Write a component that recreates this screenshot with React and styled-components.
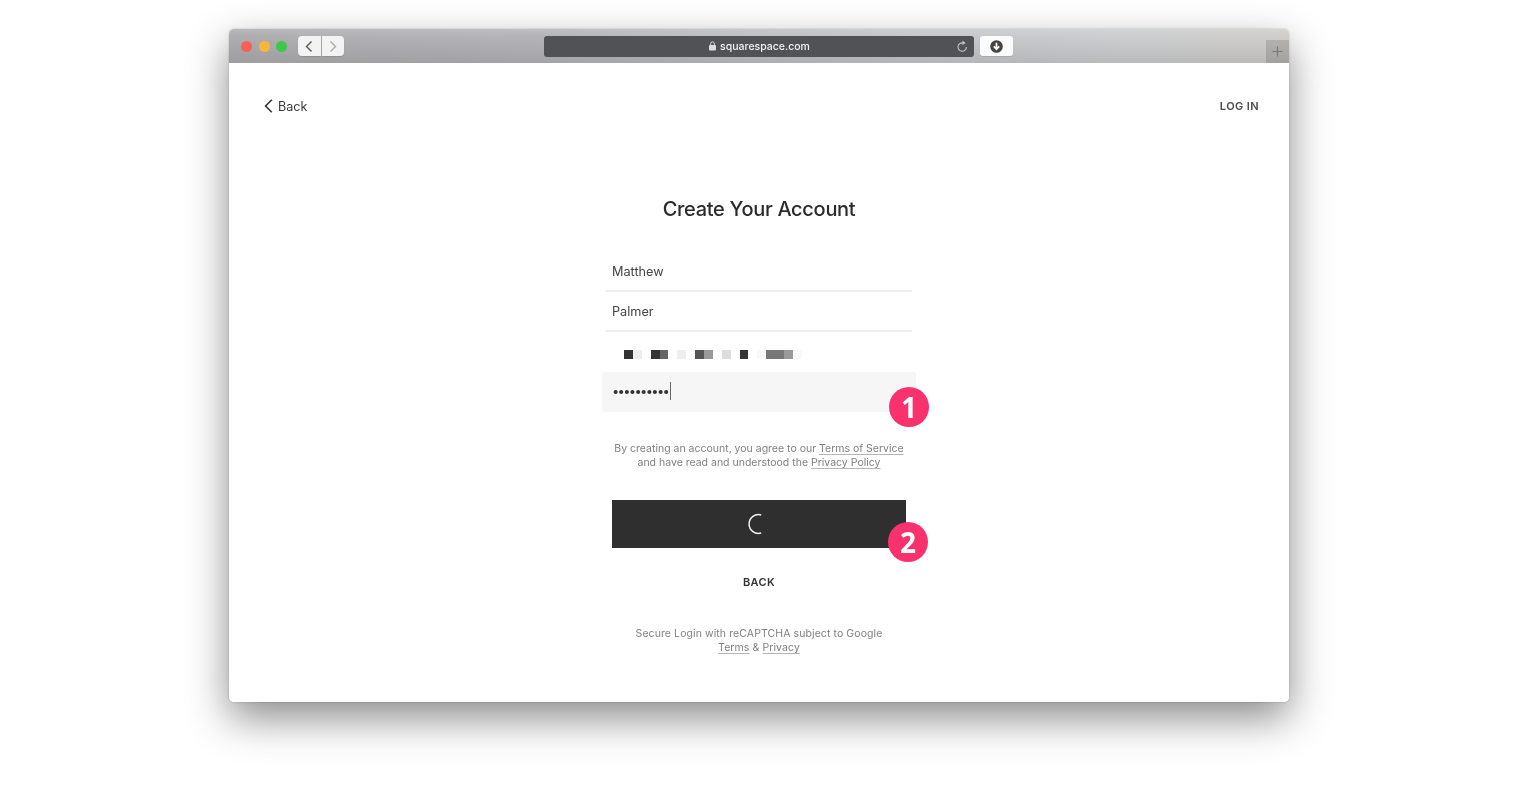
import React from "react";
import styled, { createGlobalStyle } from "styled-components";

const Global = createGlobalStyle`
  html, body { margin: 0; padding: 0; background: #fff; }
  body { font-family: Inter, "Liberation Sans", sans-serif; overflow: hidden; }
`;
const Stage = styled.div`
  width: 1518px; height: 790px; padding: 29px 229px 0; box-sizing: border-box;
`;
const Win = styled.div`
  width: 1060px; height: 673px; background: #fff; border-radius: 5px;
  box-shadow: 0 16px 42px rgba(0,0,0,.46), 0 0 2px rgba(0,0,0,.25);
  display: flex; flex-direction: column; overflow: visible;
`;
const TitleBar = styled.div`
  height: 34px; flex: none; display: flex; align-items: flex-start; padding: 7px 0 0 12px; box-sizing: border-box;
  border-radius: 5px 5px 0 0; filter: blur(.3px);
  background:
    linear-gradient(180deg, rgba(255,255,255,.14), rgba(255,255,255,0) 25%, rgba(0,0,0,.09) 100%),
    linear-gradient(90deg, #adadb0 0%, #b4b4b8 30%, #c2c4c8 60%, #cbcdcf 85%, #cfcdc9 100%);
`;
const Dots = styled.div`
  display: flex; gap: 6.5px; margin-top: 4.5px; margin-right: 11px;
`;
const Dot = styled.span`
  width: 11px; height: 11px; border-radius: 50%; background: ${p => p.$c};
`;
const NavGroup = styled.div`
  display: flex; gap: 1px; margin-right: 200px;
`;
const NavBtn = styled.div`
  width: 22.5px; height: 20px; background: #f3f3f3; border-radius: ${p => p.$left ? "4px 0 0 4px" : "0 4px 4px 0"};
  display: flex; align-items: center; justify-content: center; box-shadow: 0 1px 1px rgba(0,0,0,.12);
`;
const UrlBar = styled.div`
  width: 430px; height: 20.5px; background: #515255; border-radius: 3px; position: relative;
  display: flex; align-items: center; justify-content: center; gap: 3px;
  color: #f2f2f2; font-size: 10.5px; font-weight: 500;
`;
const Reload = styled.svg`
  position: absolute; right: 6px; top: 3.5px;
`;
const DownloadBtn = styled.div`
  width: 33px; height: 20px; margin-left: 6px; background: #fbfbfb; border-radius: 3px;
  display: flex; align-items: center; justify-content: center; box-shadow: 0 1px 1px rgba(0,0,0,.1);
`;
const NewTab = styled.div`
  width: 23px; height: 23px; margin-left: auto; margin-top: 4px; background: rgba(0,0,0,.13);
  display: flex; align-items: center; justify-content: center;
`;
const Body = styled.main`
  flex: 1; display: flex; flex-direction: column; align-items: center; color: #2f2f2f; filter: blur(.3px);
  background: #fff; border-radius: 0 0 5px 5px;
`;
const TopRow = styled.div`
  align-self: stretch; height: 86px; display: flex; align-items: center; justify-content: space-between;
  padding: 0 30px 0 34px;
`;
const BackLink = styled.div`
  display: flex; align-items: center; gap: 5px; font-size: 12.6px; color: #3a3a3a;
`;
const LoginLink = styled.div`
  font-size: 11px; font-weight: 600; letter-spacing: .4px; color: #4a4a4a;
`;
const Title = styled.h1`
  margin: 48px 0 31px; font-size: 20px; line-height: 24px; font-weight: 500; color: #2b2b2b; letter-spacing: -.3px;
`;
const Form = styled.div`
  width: 314px; display: flex; flex-direction: column; align-items: center; position: relative;
`;
const Field = styled.div`
  height: 40px; box-sizing: border-box; align-self: stretch; margin: 0 4px; padding: 0 6px;
  border-bottom: 2px solid #eeeeee; display: flex; align-items: center;
  font-size: 12.7px; color: #444;
`;
const BlurField = styled.div`
  height: 39.5px; box-sizing: border-box; align-self: stretch; padding: 5px 0 0 22px;
  display: flex; align-items: center;
`;
const Cell = styled.span`
  width: 8.9px; height: 9px; background: ${p => p.$c};
`;
const PasswordField = styled.div`
  height: 40.5px; box-sizing: border-box; align-self: stretch; padding: 0 10px 2px;
  background: #f6f6f6; border-radius: 3px; display: flex; align-items: center;
  font-size: 13px; color: #333; letter-spacing: -1.7px; position: relative;
`;
const Caret = styled.span`
  width: 1px; height: 18px; background: #666; margin-left: 1.7px;
`;
const Badge = styled.div`
  position: absolute; left: ${p => p.$x}px; top: ${p => p.$y}px; width: 40px; height: 40px; border-radius: 50%;
  background: #f9326e; color: #fff; font-size: 28px; font-weight: 700; line-height: 40px; text-align: center;
  font-family: "Open Sans", Inter, sans-serif;
`;
const Note = styled.p`
  margin: ${p => p.$top}px 0 0; font-size: 10.5px; line-height: 14px; color: #808080; text-align: center;
  letter-spacing: ${p => p.$track || 0}px;
`;
const NoteLink = styled.span`
  text-decoration: underline; text-underline-offset: 2px; text-decoration-color: #b5b5b5;
`;
const Submit = styled.div`
  width: 294px; height: 48.5px; margin-top: 29.5px; background: #2f2f2f; display: flex; align-items: center; justify-content: center;
`;
const BackAction = styled.div`
  margin-top: 27px; font-size: 11px; line-height: 14px; font-weight: 600; letter-spacing: .3px; color: #333;
`;

const mosaic = ["#333","#eee","transparent","#333","#666","transparent","#eee","transparent","#555","#999","transparent","#ddd","transparent","#333","transparent","#f9f9f9","#777","#777","#999","#f9f9f9"];

export default function App() {
  return (
    <>
      <Global />
      <Stage>
        <Win>
          <TitleBar>
            <Dots>
              <Dot $c="#f95f58" /><Dot $c="#fbb53a" /><Dot $c="#3cc84a" />
            </Dots>
            <NavGroup>
              <NavBtn $left>
                <svg width="10" height="13" viewBox="0 0 10 13"><path d="M7.5 1.5 2.5 6.5l5 5" fill="none" stroke="#555" strokeWidth="1.4" /></svg>
              </NavBtn>
              <NavBtn>
                <svg width="10" height="13" viewBox="0 0 10 13"><path d="M2.5 1.5l5 5-5 5" fill="none" stroke="#aaa" strokeWidth="1.4" /></svg>
              </NavBtn>
            </NavGroup>
            <UrlBar>
              <svg width="9" height="10" viewBox="0 0 9 10"><rect x="1" y="4" width="7" height="5.5" rx="1" fill="#ddd" /><path d="M2.6 4V2.8a1.9 1.9 0 0 1 3.8 0V4" fill="none" stroke="#ddd" strokeWidth="1" /></svg>
              squarespace.com
              <Reload width="12" height="13" viewBox="0 0 12 13">
                <path d="M7.3 3A4.2 4.2 0 1 0 10.4 7" fill="none" stroke="#c4c4c4" strokeWidth="1.1" />
                <path d="M6.5 0.5 9.5 2.9 6.5 5.2z" fill="#c4c4c4" />
              </Reload>
            </UrlBar>
            <DownloadBtn>
              <svg width="13" height="13" viewBox="0 0 13 13"><circle cx="6.5" cy="6.5" r="6.3" fill="#444" /><path d="M6.5 2.8v6M3.8 6.4l2.7 2.8 2.7-2.8" fill="none" stroke="#fff" strokeWidth="1.7" /></svg>
            </DownloadBtn>
            <NewTab>
              <svg width="11" height="11" viewBox="0 0 11 11"><path d="M5.5 0.5v10M0.5 5.5h10" stroke="#777" strokeWidth="1.1" /></svg>
            </NewTab>
          </TitleBar>
          <Body>
            <TopRow>
              <BackLink>
                <svg width="10" height="14" viewBox="0 0 10 14"><path d="M8.8 .8 2.6 7l6.2 6.2" fill="none" stroke="#333" strokeWidth="1.6" /></svg>
                Back
              </BackLink>
              <LoginLink>LOG IN</LoginLink>
            </TopRow>
            <Title>Create Your Account</Title>
            <Form>
              <Field>Matthew</Field>
              <Field>Palmer</Field>
              <BlurField>
                {mosaic.map((c, i) => <Cell key={i} $c={c} />)}
              </BlurField>
              <PasswordField>
                ••••••••••<Caret />
              </PasswordField>
              <Badge $x={287} $y={135}>1</Badge>
              <Note $top={30}>
                By creating an account, you agree to our <NoteLink>Terms of Service</NoteLink><br />
                and have read and understood the <NoteLink>Privacy Policy</NoteLink>
              </Note>
              <Submit>
                <svg width="22" height="22" viewBox="0 0 22 22"><path d="M13.2 2A9.4 9.4 0 1 0 13.2 20" fill="none" stroke="#f2f2f2" strokeWidth="1.5" /></svg>
              </Submit>
              <Badge $x={286} $y={270}>2</Badge>
              <BackAction>BACK</BackAction>
              <Note $top={38} $track={0.09}>
                Secure Login with reCAPTCHA subject to Google<br />
                <NoteLink>Terms</NoteLink> &amp; <NoteLink>Privacy</NoteLink>
              </Note>
            </Form>
          </Body>
        </Win>
      </Stage>
    </>
  );
}
